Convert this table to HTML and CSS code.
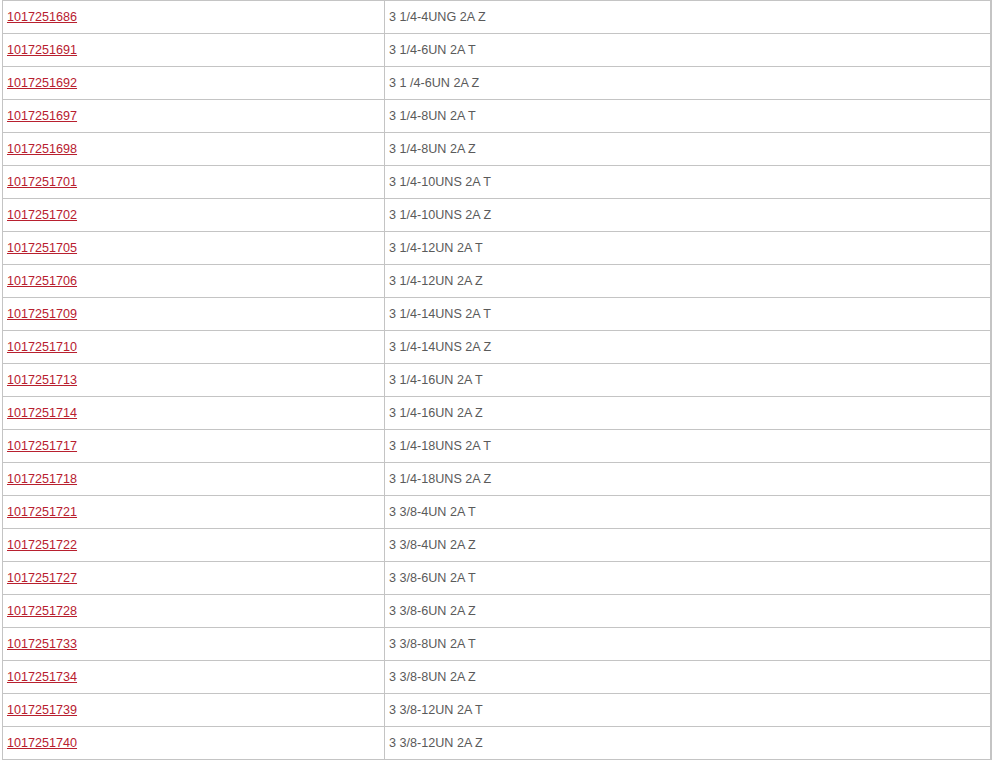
FILE: index.html
```html
<!DOCTYPE html>
<html>
<head>
<meta charset="utf-8">
<link rel="stylesheet" href="styles.css">
</head>
<body>
<table class="parts">
<tbody>
<tr><td class="code"><a href="#">1017251686</a></td><td class="desc">3 1/4-4UNG 2A Z</td></tr>
<tr><td class="code"><a href="#">1017251691</a></td><td class="desc">3 1/4-6UN 2A T</td></tr>
<tr><td class="code"><a href="#">1017251692</a></td><td class="desc">3 1 /4-6UN 2A Z</td></tr>
<tr><td class="code"><a href="#">1017251697</a></td><td class="desc">3 1/4-8UN 2A T</td></tr>
<tr><td class="code"><a href="#">1017251698</a></td><td class="desc">3 1/4-8UN 2A Z</td></tr>
<tr><td class="code"><a href="#">1017251701</a></td><td class="desc">3 1/4-10UNS 2A T</td></tr>
<tr><td class="code"><a href="#">1017251702</a></td><td class="desc">3 1/4-10UNS 2A Z</td></tr>
<tr><td class="code"><a href="#">1017251705</a></td><td class="desc">3 1/4-12UN 2A T</td></tr>
<tr><td class="code"><a href="#">1017251706</a></td><td class="desc">3 1/4-12UN 2A Z</td></tr>
<tr><td class="code"><a href="#">1017251709</a></td><td class="desc">3 1/4-14UNS 2A T</td></tr>
<tr><td class="code"><a href="#">1017251710</a></td><td class="desc">3 1/4-14UNS 2A Z</td></tr>
<tr><td class="code"><a href="#">1017251713</a></td><td class="desc">3 1/4-16UN 2A T</td></tr>
<tr><td class="code"><a href="#">1017251714</a></td><td class="desc">3 1/4-16UN 2A Z</td></tr>
<tr><td class="code"><a href="#">1017251717</a></td><td class="desc">3 1/4-18UNS 2A T</td></tr>
<tr><td class="code"><a href="#">1017251718</a></td><td class="desc">3 1/4-18UNS 2A Z</td></tr>
<tr><td class="code"><a href="#">1017251721</a></td><td class="desc">3 3/8-4UN 2A T</td></tr>
<tr><td class="code"><a href="#">1017251722</a></td><td class="desc">3 3/8-4UN 2A Z</td></tr>
<tr><td class="code"><a href="#">1017251727</a></td><td class="desc">3 3/8-6UN 2A T</td></tr>
<tr><td class="code"><a href="#">1017251728</a></td><td class="desc">3 3/8-6UN 2A Z</td></tr>
<tr><td class="code"><a href="#">1017251733</a></td><td class="desc">3 3/8-8UN 2A T</td></tr>
<tr><td class="code"><a href="#">1017251734</a></td><td class="desc">3 3/8-8UN 2A Z</td></tr>
<tr><td class="code"><a href="#">1017251739</a></td><td class="desc">3 3/8-12UN 2A T</td></tr>
<tr><td class="code"><a href="#">1017251740</a></td><td class="desc">3 3/8-12UN 2A Z</td></tr>
</tbody>
</table>
</body>
</html>
```

FILE: styles.css
```css
html, body {
  margin: 0;
  padding: 0;
  background: #ffffff;
}

body {
  font-family: "Liberation Sans", Arial, sans-serif;
  font-size: 12.6px;
  color: #5a5a5a;
}

.parts {
  border-collapse: collapse;
  margin-left: 2px;
  width: 990px;
  table-layout: fixed;
  border-right: 2px solid #c4c4c4;
}

.parts td {
  border: 1px solid #c4c4c4;
  height: 33px;
  padding: 0 4px;
  vertical-align: middle;
  box-sizing: border-box;
}

.parts .code {
  width: 382px;
}

.parts a {
  color: #b8202f;
  text-decoration: underline;
}

.parts .desc {
  color: #5a5a5a;
}
```
